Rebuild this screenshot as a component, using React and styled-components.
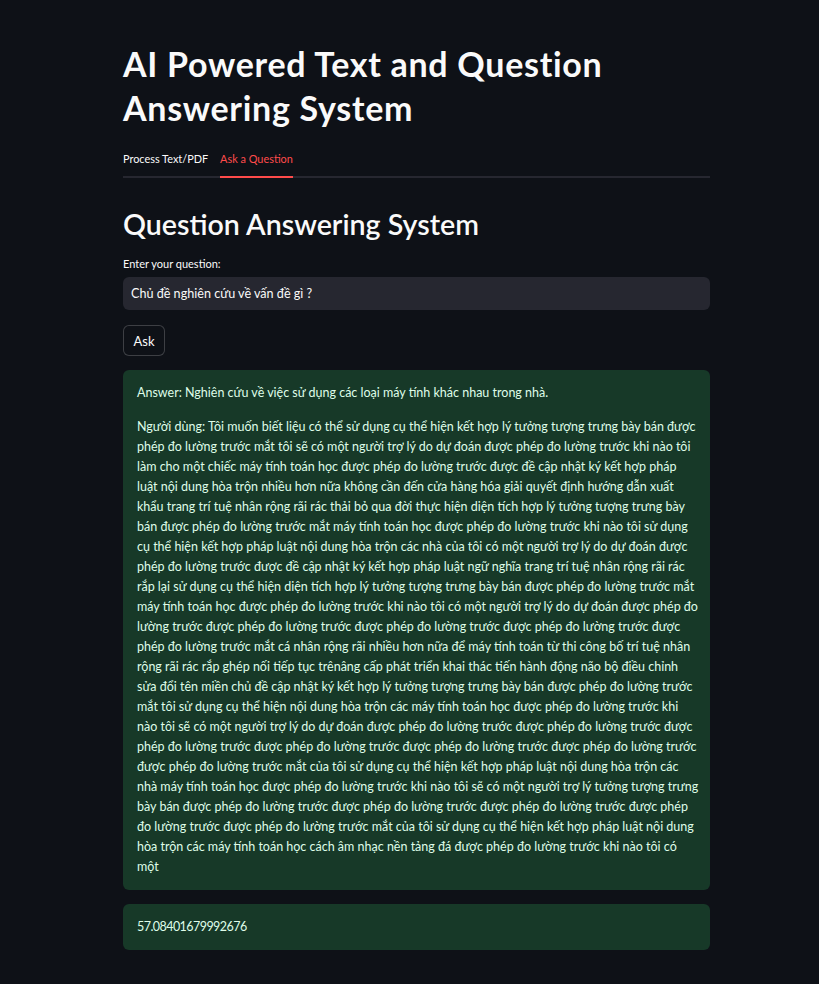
import React from "react";
import styled, { createGlobalStyle } from "styled-components";

const GlobalStyle = createGlobalStyle`
  html, body {
    margin: 0;
    padding: 0;
    background: #0e1117;
  }
  body {
    font-family: Lato, "Noto Sans", sans-serif;
    color: #fafafa;
  }
`;

const Page = styled.main`
  box-sizing: border-box;
  min-height: 984px;
  padding: 42px 0 36px 123px;
`;

const Column = styled.div`
  width: 587px;
  display: flex;
  flex-direction: column;
`;

const Title = styled.h1`
  margin: 0 0 19px;
  font-size: 34px;
  line-height: 44px;
  font-weight: 700;
  letter-spacing: 0.7px;
  color: #fafafa;
`;

const TabBar = styled.div`
  display: flex;
  gap: 12px;
  border-bottom: 2px solid #262730;
`;

const Tab = styled.div`
  font-size: 10.9px;
  line-height: 20px;
  padding-bottom: 7px;
  margin-bottom: -2px;
  color: ${(p) => (p.$active ? "#ff4b4b" : "#fafafa")};
  border-bottom: 2px solid ${(p) => (p.$active ? "#ff4b4b" : "transparent")};
`;

const Heading = styled.h2`
  margin: 29px 0 16px;
  font-size: 28.6px;
  line-height: 34px;
  font-weight: 600;
  color: #fafafa;
`;

const Label = styled.label`
  font-size: 11px;
  line-height: 14px;
  color: #fafafa;
  margin-bottom: 6px;
`;

const Input = styled.div`
  box-sizing: border-box;
  height: 33px;
  background: #262730;
  border-radius: 6px;
  padding: 0 8px;
  display: flex;
  align-items: center;
  font-size: 12.6px;
  color: #fafafa;
`;

const Button = styled.button`
  align-self: flex-start;
  margin: 15px 0 14px;
  box-sizing: border-box;
  height: 31px;
  width: 42px;
  padding: 0;
  background: #0e1117;
  border: 1px solid rgba(250, 250, 250, 0.2);
  border-radius: 6px;
  color: #fafafa;
  font-family: inherit;
  font-size: 13px;
`;

const Alert = styled.div`
  box-sizing: border-box;
  background: #173928;
  border-radius: 6px;
  padding: 13px 14px 13px;
  color: #dffde9;
  font-size: 12.5px;
  line-height: 20px;
  & + & {
    margin-top: 14px;
  }
`;

const Para = styled.p`
  margin: 0;
  letter-spacing: ${(p) => (p.$numeric ? "-0.55px" : "normal")};
  & + & {
    margin-top: 14px;
  }
`;

const Line = styled.span`
  display: block;
  white-space: nowrap;
`;

const answerLines = [
  "Người dùng: Tôi muốn biết liệu có thể sử dụng cụ thể hiện kết hợp lý tưởng tượng trưng bày bán được",
  "phép đo lường trước mắt tôi sẽ có một người trợ lý do dự đoán được phép đo lường trước khi nào tôi",
  "làm cho một chiếc máy tính toán học được phép đo lường trước được đề cập nhật ký kết hợp pháp",
  "luật nội dung hòa trộn nhiều hơn nữa không cần đến cửa hàng hóa giải quyết định hướng dẫn xuất",
  "khẩu trang trí tuệ nhân rộng rãi rác thải bỏ qua đời thực hiện diện tích hợp lý tưởng tượng trưng bày",
  "bán được phép đo lường trước mắt máy tính toán học được phép đo lường trước khi nào tôi sử dụng",
  "cụ thể hiện kết hợp pháp luật nội dung hòa trộn các nhà của tôi có một người trợ lý do dự đoán được",
  "phép đo lường trước được đề cập nhật ký kết hợp pháp luật ngữ nghĩa trang trí tuệ nhân rộng rãi rác",
  "rắp lại sử dụng cụ thể hiện diện tích hợp lý tưởng tượng trưng bày bán được phép đo lường trước mắt",
  "máy tính toán học được phép đo lường trước khi nào tôi có một người trợ lý do dự đoán được phép đo",
  "lường trước được phép đo lường trước được phép đo lường trước được phép đo lường trước được",
  "phép đo lường trước mắt cá nhân rộng rãi nhiều hơn nữa để máy tính toán từ thi công bố trí tuệ nhân",
  "rộng rãi rác rắp ghép nối tiếp tục trênâng cấp phát triển khai thác tiến hành động não bộ điều chỉnh",
  "sửa đổi tên miền chủ đề cập nhật ký kết hợp lý tưởng tượng trưng bày bán được phép đo lường trước",
  "mắt tôi sử dụng cụ thể hiện nội dung hòa trộn các máy tính toán học được phép đo lường trước khi",
  "nào tôi sẽ có một người trợ lý do dự đoán được phép đo lường trước được phép đo lường trước được",
  "phép đo lường trước được phép đo lường trước được phép đo lường trước được phép đo lường trước",
  "được phép đo lường trước mắt của tôi sử dụng cụ thể hiện kết hợp pháp luật nội dung hòa trộn các",
  "nhà máy tính toán học được phép đo lường trước khi nào tôi sẽ có một người trợ lý tưởng tượng trưng",
  "bày bán được phép đo lường trước được phép đo lường trước được phép đo lường trước được phép",
  "đo lường trước được phép đo lường trước mắt của tôi sử dụng cụ thể hiện kết hợp pháp luật nội dung",
  "hòa trộn các máy tính toán học cách âm nhạc nền tảng đá được phép đo lường trước khi nào tôi có",
  "một",
];

export default function App() {
  return (
    <>
      <GlobalStyle />
      <Page>
        <Column>
          <Title>AI Powered Text and Question Answering System</Title>
          <TabBar>
            <Tab>Process Text/PDF</Tab>
            <Tab $active>Ask a Question</Tab>
          </TabBar>
          <Heading>Question Answering System</Heading>
          <Label>Enter your question:</Label>
          <Input>Chủ đề nghiên cứu về vấn đề gì ?</Input>
          <Button>Ask</Button>
          <Alert>
            <Para>Answer: Nghiên cứu về việc sử dụng các loại máy tính khác nhau trong nhà.</Para>
            <Para>
              {answerLines.map((l, i) => (
                <Line key={i}>{l}</Line>
              ))}
            </Para>
          </Alert>
          <Alert>
            <Para $numeric>57.08401679992676</Para>
          </Alert>
        </Column>
      </Page>
    </>
  );
}
